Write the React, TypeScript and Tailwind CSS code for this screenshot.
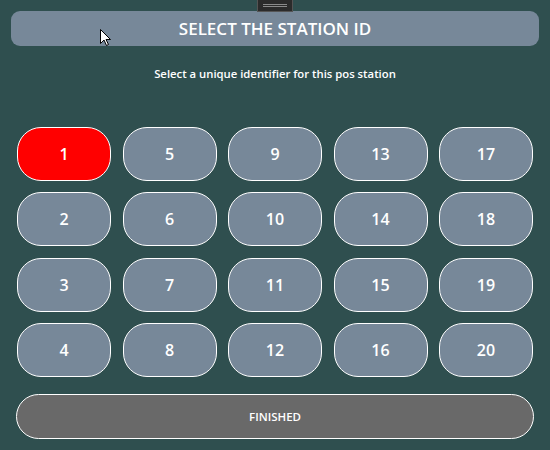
const IDS = [1, 5, 9, 13, 17, 2, 6, 10, 14, 18, 3, 7, 11, 15, 19, 4, 8, 12, 16, 20]

export default function App() {
  const selected = 1

  return (
    <div
      className="relative w-[550px] h-[450px] bg-[#2f4f4f] overflow-hidden"
      style={{ fontFamily: '"Open Sans", "Noto Sans", sans-serif' }}
    >
      {/* drag handle */}
      <div className="absolute left-[257px] top-0 w-[36px] h-[12px] bg-[#2b2b2b] border border-[#555] border-t-0 flex flex-col items-center justify-center gap-[1px]">
        <div className="w-[24px] h-px bg-[#8a8a8a]" />
        <div className="w-[24px] h-px bg-[#8a8a8a]" />
      </div>

      <div className="pt-[11px] px-[11px]">
        <div className="h-[35px] rounded-[9px] bg-[#778899] flex items-center justify-center text-white text-[17px] font-semibold">
          SELECT THE STATION ID
        </div>
      </div>

      <p className="mt-[20px] text-center text-white text-[11.3px] font-semibold">
        Select a unique identifier for this pos station
      </p>

      <div className="mt-[44px] pl-[17px] grid grid-cols-[repeat(5,94px)] gap-x-[11.5px] gap-y-[11.3px]">
        {IDS.map((id) => (
          <div
            key={id}
            className={`h-[54px] rounded-[24px] border border-white flex items-center justify-center text-white text-[16px] font-semibold ${
              id === selected ? 'bg-[#ff0000]' : 'bg-[#778899]'
            }`}
          >
            {id}
          </div>
        ))}
      </div>

      <div className="mt-[17px] px-[16px]">
        <div className="h-[45px] rounded-[23px] border border-white bg-[#696969] flex items-center justify-center text-white text-[11.5px] font-semibold">
          FINISHED
        </div>
      </div>

      {/* mouse cursor */}
      <svg className="absolute left-[100px] top-[29px]" width="12" height="18" viewBox="0 0 12 18">
        <path d="M0.5 0.5 L0.5 14.5 L4 11 L6.5 16.5 L8.5 15.5 L6 10.5 L10.5 10.5 Z" fill="#fff" stroke="#000" strokeWidth="1" />
      </svg>
    </div>
  )
}
